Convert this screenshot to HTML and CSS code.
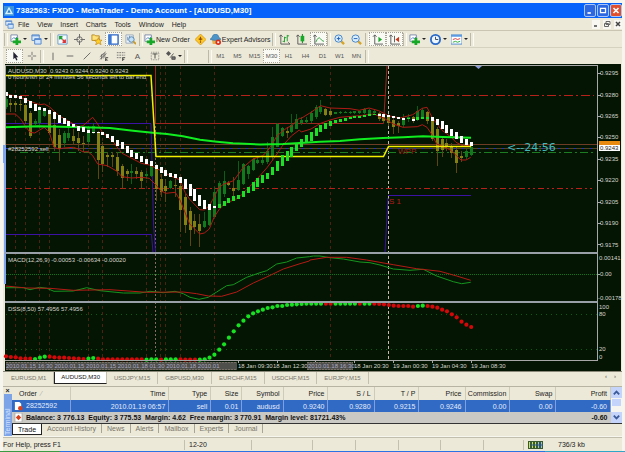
FILE: index.html
```html
<!DOCTYPE html>
<html lang="en">
<head>
<meta charset="utf-8">
<title>MetaTrader - AUDUSD,M30</title>
<link rel="stylesheet" href="styles.css">
</head>
<body>
<svg class="defs" aria-hidden="true">
  <symbol id="i-new" viewBox="0 0 12 12"><path d="M1 1h7v7H1z" fill="#fff" stroke="#7a8aa8"/><path d="M2 6l2-2 2 1 2-2" stroke="#57c" fill="none"/><path d="M6 4h3v3h3v3H9v2H6v-2H3V7h3z" fill="#18a828"/></symbol>
  <symbol id="i-windows" viewBox="0 0 12 12"><path d="M1 1h8v6H1z" fill="#dcecff" stroke="#4f83c9"/><path d="M4 5h7v6H4z" fill="#cfe4ff" stroke="#4f83c9"/><path d="M1 2h8M4 6h7" stroke="#4f83c9"/></symbol>
  <symbol id="i-market" viewBox="0 0 12 12"><path d="M1 1h10v10H1z" fill="#f4fbff" stroke="#6a9bc8"/><path d="M3 3l3 3M3 6V3h3" stroke="#20a030" stroke-width="1.5" fill="none"/><path d="M6 6l3 3M9 6v3H6" stroke="#d33" stroke-width="1.5" fill="none"/></symbol>
  <symbol id="i-target" viewBox="0 0 12 12"><circle cx="6" cy="6" r="3" fill="none" stroke="#666"/><path d="M6 0v5M6 7v5M0 6h5M7 6h5" stroke="#666"/></symbol>
  <symbol id="i-folder" viewBox="0 0 12 12"><path d="M1 1h3l1 1h4v5H1z" fill="#ffe27a" stroke="#b98b20"/><path d="M8 4l1 2.500 3 .2-2 2 1 3-3-1.700L5 12l1-3-2-2 3-.5z" fill="#ffd028" stroke="#b87812" stroke-width=".6"/></symbol>
  <symbol id="i-panel" viewBox="0 0 12 12"><path d="M1 1h10v10H1z" fill="#fff" stroke="#2a65c4" stroke-width="1.500"/><path d="M1 1h3v10H1z" fill="#3c7ad8"/></symbol>
  <symbol id="i-tester" viewBox="0 0 12 12"><path d="M1 1h8v9H1z" fill="#eef4fb" stroke="#9ab"/><path d="M3 3v4M5 2v5" stroke="#68a"/><circle cx="7" cy="6" r="3" fill="#bfe0f8" stroke="#5580a8"/><path d="M9 8l3 3" stroke="#c99a2c" stroke-width="2"/></symbol>
  <symbol id="i-diamond" viewBox="0 0 12 12"><path d="M6 0l6 6-6 6-6-6z" fill="#ffc928" stroke="#c98708" stroke-width=".7"/><path d="M6 3v4M6 8v1.500M4 5.500h4" stroke="#8a4a00" stroke-width="1.300"/></symbol>
  <symbol id="i-expert" viewBox="0 0 12 12"><path d="M2 6h8l-1 5H3z" fill="#e8b04a"/><path d="M0 6q1-2 2-2 1-4 4-4t4 4q1 0 2 2-6 2-12 0z" fill="#4d94c8" stroke="#38729d" stroke-width=".6"/><circle cx="9" cy="9" r="3" fill="#d9301c"/><path d="M8 8h2v2H8z" fill="#fff"/></symbol>
  <symbol id="i-bars" viewBox="0 0 12 12"><path d="M2 1v10h10M0 3l2-2 2 2M10 9l2 2" fill="none" stroke="#555"/><path d="M6 3v6M4 8h2M6 4h2M9 1v7M9 2h2" stroke="#1c9c2c" fill="none"/></symbol>
  <symbol id="i-candle" viewBox="0 0 12 12"><path d="M2 1v10h10M0 3l2-2 2 2" fill="none" stroke="#555"/><path d="M7 0v10" stroke="#087818"/><path d="M5 2h4v6H5z" fill="#18a82a"/></symbol>
  <symbol id="i-line" viewBox="0 0 12 12"><path d="M2 1v10h10M0 3l2-2 2 2" fill="none" stroke="#555"/><path d="M3 9q3-7 5-4t4 3" fill="none" stroke="#26a038"/></symbol>
  <symbol id="i-zoomin" viewBox="0 0 12 12"><path d="M8 8l3 3" stroke="#d4a52c" stroke-width="2.500"/><circle cx="5" cy="5" r="4" fill="#d8eeff" stroke="#3f7fc4"/><path d="M3 5h4M5 3v4" stroke="#1d5bb0"/></symbol>
  <symbol id="i-zoomout" viewBox="0 0 12 12"><path d="M8 8l3 3" stroke="#d4a52c" stroke-width="2.500"/><circle cx="5" cy="5" r="4" fill="#d8eeff" stroke="#3f7fc4"/><path d="M3 5h4" stroke="#1d5bb0"/></symbol>
  <symbol id="i-scroll" viewBox="0 0 12 12"><path d="M3 1v10h9M1 3l2-2 2 2" fill="none" stroke="#555"/><path d="M7 3l4 3-4 3z" fill="#18a82a"/></symbol>
  <symbol id="i-shift" viewBox="0 0 12 12"><path d="M2 1v10h10M0 3l2-2 2 2M6 2v7" fill="none" stroke="#555"/><path d="M11 3v6L7 6z" fill="#c8381c"/></symbol>
  <symbol id="i-clock" viewBox="0 0 12 12"><circle cx="6" cy="6" r="5" fill="#eef6ff" stroke="#2a6ac8" stroke-width="2"/><path d="M6 3v3h3" stroke="#345" fill="none"/></symbol>
  <symbol id="i-template" viewBox="0 0 12 12"><path d="M0 1h12v10H0z" fill="#fff" stroke="#4a88d0"/><path d="M0 1h12v2H0z" fill="#5b9be4"/><path d="M2 6l3-1 2 1 3-1" stroke="#d33" fill="none"/><path d="M2 9l3-1 2 1 3-1" stroke="#2a3" fill="none"/></symbol>
  <symbol id="i-arrow" viewBox="0 0 12 12"><path d="M4 1v9l2-2 1.500 3.500 1.500-.7L7.500 7.500H10z" fill="#223"/></symbol>
  <symbol id="i-cross" viewBox="0 0 12 12"><path d="M6 1v4M6 7v4M1 6h4M7 6h4" stroke="#666"/></symbol>
  <symbol id="i-vline" viewBox="0 0 12 12"><path d="M6 2v9" stroke="#555"/></symbol>
  <symbol id="i-hline" viewBox="0 0 12 12"><path d="M2 6h8" stroke="#555"/></symbol>
  <symbol id="i-trend" viewBox="0 0 12 12"><path d="M2 10l8-8" stroke="#555"/></symbol>
  <symbol id="i-channel" viewBox="0 0 12 12"><path d="M1 7l7-6M1 10l8-7M3 4v6M5 3v6M7 2v6" stroke="#555" stroke-width=".8"/><path d="M11 8H8v4h3M8 10h2" stroke="#333" fill="none"/></symbol>
  <symbol id="i-fibo" viewBox="0 0 12 12"><path d="M1 2h10M1 5h10M1 8h7" stroke="#666" stroke-dasharray="2 1"/><path d="M8 12V8h3M8 10h2" stroke="#333" fill="none"/></symbol>
  <symbol id="i-label" viewBox="0 0 12 12"><path d="M1.500 1.500h9v9h-9z" fill="none" stroke="#777" stroke-dasharray="1 1"/><path d="M3 3.500h6M6 3.500V9" stroke="#333"/></symbol>
  <symbol id="i-shapes" viewBox="0 0 12 12"><path d="M3 0l3 3-3 3-3-3z" fill="#555"/><path d="M5 8l4-5M7 7h4v3H7z" stroke="#444" fill="#777"/></symbol>
</svg>

<header class="title">
  <svg class="ico" viewBox="0 0 12 12"><path d="M0 0h12v12H0z" fill="#3b93dd"/><path d="M6 1l5 9H1z" fill="#d8f1ff"/><path d="M6 4l2 4H4z" fill="#2b7cc2"/></svg>
  <h1>7382563: FXDD - MetaTrader - Demo Account - [AUDUSD,M30]</h1>
  <button class="win" aria-label="Minimize"><svg viewBox="0 0 12 12"><path d="M3 9h4" stroke="#fff" stroke-width="2"/></svg></button>
  <button class="win" aria-label="Restore"><svg viewBox="0 0 12 12"><path d="M3 3.500h6v5H3z" fill="none" stroke="#fff" stroke-width="1.500"/></svg></button>
  <button class="win close" aria-label="Close"><svg viewBox="0 0 12 12"><path d="M3 3l6 6M9 3l-6 6" stroke="#fff" stroke-width="2"/></svg></button>
</header>

<nav class="menu">
  <svg class="ico"><use href="#i-windows"/></svg>
  <button>File</button><button>View</button><button>Insert</button><button>Charts</button><button>Tools</button><button>Window</button><button>Help</button>
  <span class="mdi"><button aria-label="Minimize chart"><svg viewBox="0 0 8 8"><path d="M2 6h3" stroke="#444" stroke-width="1.500"/></svg></button><button aria-label="Restore chart"><svg viewBox="0 0 8 8"><path d="M3 1.500h4v3H3zM1.500 3.500h4v3h-4z" fill="none" stroke="#666"/></svg></button><button aria-label="Close chart"><svg viewBox="0 0 8 8"><path d="M2 2l4 4M6 2L2 6" stroke="#444" stroke-width="1.500"/></svg></button></span>
</nav>

<div class="bar">
  <i class="grip"></i>
  <button class="b dd" aria-label="New chart"><svg><use href="#i-new"/></svg></button>
  <button class="b dd" aria-label="Profiles"><svg><use href="#i-windows"/></svg></button>
  <i class="grip"></i>
  <button class="b" aria-label="Market watch"><svg><use href="#i-market"/></svg></button>
  <button class="b" aria-label="Data window"><svg><use href="#i-target"/></svg></button>
  <button class="b" aria-label="Navigator"><svg><use href="#i-folder"/></svg></button>
  <button class="b on" aria-label="Terminal panel"><svg><use href="#i-panel"/></svg></button>
  <button class="b" aria-label="Strategy tester"><svg><use href="#i-tester"/></svg></button>
  <i class="grip"></i>
  <button class="b wide"><svg><use href="#i-new"/></svg>New Order</button>
  <button class="b" aria-label="MetaEditor"><svg><use href="#i-diamond"/></svg></button>
  <button class="b wide"><svg><use href="#i-expert"/></svg>Expert Advisors</button>
  <i class="grip"></i>
  <button class="b" aria-label="Bar chart"><svg><use href="#i-bars"/></svg></button>
  <button class="b" aria-label="Candlesticks"><svg><use href="#i-candle"/></svg></button>
  <button class="b on" aria-label="Line chart"><svg><use href="#i-line"/></svg></button>
  <i class="grip"></i>
  <button class="b" aria-label="Zoom in"><svg><use href="#i-zoomin"/></svg></button>
  <button class="b" aria-label="Zoom out"><svg><use href="#i-zoomout"/></svg></button>
  <i class="grip"></i>
  <button class="b on" aria-label="Auto scroll"><svg><use href="#i-scroll"/></svg></button>
  <button class="b on" aria-label="Chart shift"><svg><use href="#i-shift"/></svg></button>
  <i class="grip"></i>
  <button class="b dd" aria-label="Indicators"><svg><use href="#i-new"/></svg></button>
  <button class="b dd" aria-label="Periods"><svg><use href="#i-clock"/></svg></button>
  <button class="b dd" aria-label="Templates"><svg><use href="#i-template"/></svg></button>
  <i class="grip"></i>
</div>

<div class="bar tools">
  <button class="b on" aria-label="Cursor"><svg><use href="#i-arrow"/></svg></button>
  <button class="b" aria-label="Crosshair"><svg><use href="#i-cross"/></svg></button>
  <i class="grip"></i>
  <button class="b" aria-label="Vertical line"><svg><use href="#i-vline"/></svg></button>
  <button class="b" aria-label="Horizontal line"><svg><use href="#i-hline"/></svg></button>
  <button class="b" aria-label="Trendline"><svg><use href="#i-trend"/></svg></button>
  <button class="b" aria-label="Channel"><svg><use href="#i-channel"/></svg></button>
  <button class="b" aria-label="Fibonacci"><svg><use href="#i-fibo"/></svg></button>
  <button class="b letter">A</button>
  <button class="b" aria-label="Text label"><svg><use href="#i-label"/></svg></button>
  <button class="b dd" aria-label="Arrows"><svg><use href="#i-shapes"/></svg></button>
  <i class="grip"></i>
  <i class="gap"></i>
  <i class="grip"></i>
  <button class="b">M1</button><button class="b">M5</button><button class="b">M15</button><button class="b on">M30</button><button class="b">H1</button><button class="b">H4</button><button class="b">D1</button><button class="b">W1</button><button class="b">MN</button>
  <i class="grip"></i>
</div>

<main>
<svg class="chart" viewBox="3 64 619 308" role="img" aria-label="AUDUSD M30 chart">
  <path d="M3 64h2v308H3z" fill="#ece9d8"/>
  <path d="M5 64h616v308H5z" fill="#041504"/>
  <path d="M2 145h4v18H2zM4 163h2v121H4z" fill="#7fa6ee"/>
  <g class="crisp">
    <path class="grid" d="M15.500 66v294M25.500 66v294M39.500 66v294M49.500 66v294M88.500 66v294M102.500 66v294M146.500 66v294M160.500 66v294M165.500 66v294M180.500 66v294M214.500 66v294M330.500 66v294"/>
    <path d="M155.500 66v294" stroke="#876b62" stroke-dasharray="2 2"/>
    <path d="M388.500 66v294" stroke="#c8b8b0" stroke-dasharray="3 2"/>
    <path class="red" d="M20 95.500H594" stroke-dasharray="9 3 2 3"/>
    <path class="red" d="M6 188.500H594" stroke-dasharray="6 3 2 3 2 3"/>
    <path d="M6 144.500H597" stroke="#6e3c24"/>
    <path d="M6 148.500H597" stroke="#554522"/>
    <path d="M6 148.500H597" stroke="#2233c0" stroke-dasharray="2 6"/>
    <path d="M20 152.500H594" stroke="#1c7c22" stroke-dasharray="8 3 2 3"/>
    <path d="M6 274.500H597" stroke="#137518" stroke-dasharray="1 1"/>
    <path d="M6 314.500H597M6 349.500H597" stroke="#0f5a14" stroke-dasharray="1 4"/>
  </g>
  <path class="violet" d="M6 123.500H151L153.500 224l2 28M6 234.500H151.500l1.500 18M388 198l-3 54M388 195.500h83"/>
  <path class="red2" d="M155.500 66V123.500H383.500L387 66"/>
  <g id="candles" class="crisp"></g>
  <path id="band-high" class="band"/>
  <path id="band-low" class="band"/>
  <path d="M5 127.300L38 126.300 83 127.300 110 128 133 130.700 155 133 167 134 183 136.300 200 139.700 217 141.700 233 143.300 260 144.500 283 144 300 143 320 141.700 340 141 360 139.300 383 138 403 137.300 423 136.300 443 137 471 137.700" fill="none" stroke="#10ee20" stroke-width="2"/>
  <path d="M5 75.500H151L156 156.500H383.500L388.500 146.500H471" fill="none" stroke="#f4ee00" stroke-width="1.500"/>
  <g id="ribbon" class="crisp"></g>
  <path id="macd" fill="none" stroke="#16951e"/>
  <path id="signal" fill="none" stroke="#b41a14"/>
  <g id="dss"></g>
  <path d="M475 66h7l-3.500 3z" fill="#8a9ad8"/>
  <g class="crisp">
    <path d="M5 65.500h593M5.500 65v80M597.500 65v296M5 360.500h593" stroke="#a8a8a8"/>
    <path d="M5 252h593v2H5zM5 301h593v2H5z" fill="#9aa0a8"/>
    <path d="M598 73.500h3M598 95.500h3M598 116.500h3M598 137.500h3M598 159.500h3M598 180.500h3M598 202.500h3M598 223.500h3M598 244.500h3M598 274.500h2M238.500 361v2M277.500 361v2M315.500 361v2M354.500 361v2M393.500 361v2M432.500 361v2M471.500 361v2" stroke="#a8a8a8"/>
    <path d="M3 371.500h619" stroke="#8a8878"/>
    <path d="M599 141h21v4h-21z" fill="#e88a10"/>
    <path d="M599 145h21v6h-21z" fill="#fff"/>
    <path d="M6 362h231v8H6zM307 362h46v8h-46z" fill="#4f4f4c"/>
    <path d="M6 362.500h231M6 369.500h231M307 362.500h46M307 369.500h46" stroke="#777064" stroke-dasharray="2 1"/>
  </g>
  <g class="lbl">
    <text x="8" y="73">AUDUSD,M30&#160; 0.9243 0.9244 0.9240 0.9243</text>
    <text x="8" y="79">0 hours/ish or 24 minutes 56 seconds left to bar end</text>
    <text x="8" y="151">#28252592 sell</text>
    <text x="8" y="262">MACD(12,26,9) -0.00053 -0.00634 -0.00020</text>
    <text x="8" y="311">DSS(8,50) 57.4956 57.4956</text>
    <text x="600" y="75">0.9295</text><text x="600" y="97">0.9280</text><text x="600" y="118">0.9265</text><text x="600" y="139">0.9250</text><text x="600" y="161">0.9235</text><text x="600" y="182">0.9220</text><text x="600" y="204">0.9205</text><text x="600" y="225">0.9190</text><text x="600" y="247">0.9175</text>
    <text x="600" y="150" class="dark">0.9243</text>
    <text x="599" y="260">0.00141</text><text x="600" y="276">0.00</text><text x="598" y="300">-0.00178</text>
    <text x="599" y="309">100</text><text x="599" y="316">80</text><text x="599" y="351">20</text><text x="599" y="359">0</text>
    <text x="238" y="368">18 Jan 09:30</text><text x="273" y="368">18 Jan 12:30</text><text x="354" y="368">18 Jan 20:30</text><text x="393" y="368">19 Jan 00:30</text><text x="432" y="368">19 Jan 04:30</text><text x="471" y="368">19 Jan 08:30</text>
    <g class="dim"><text x="6" y="368">2010.01.15 16:30 2010.01.15 2010.01.15 2010.01.18 01:30 2010.01.18 2010.01</text><text x="308" y="368">2010.01.18 16:30</text></g>
  </g>
  <text x="398" y="154" class="mark wpp">WPP</text>
  <text x="389" y="204" class="mark">S 1</text>
  <text x="507" y="151" class="count">&lt;--24:56</text>
</svg>

<div class="tabs charts">
  <button>EURUSD,M1</button><button class="cur">AUDUSD,M30</button><button>USDJPY,M15</button><button>GBPUSD,M30</button><button>EURCHF,M15</button><button>USDCHF,M15</button><button>EURJPY,M15</button>
  <span class="arrows"><b>‹</b><b>›</b></span>
</div>
</main>

<section class="terminal">
  <div class="side"><button aria-label="Close terminal">×</button><span>Terminal</span></div>
  <div class="pane">
    <div class="list">
      <table>
        <colgroup><col class="c58"><col class="c99"><col class="c42"><col class="c31"><col class="c41"><col class="c45"><col class="c46"><col class="c45"><col class="c46"><col class="c45"><col class="c46"><col class="c54"></colgroup>
        <thead><tr><th class="l">Order <span class="sort">⁄</span></th><th>Time</th><th>Type</th><th>Size</th><th>Symbol</th><th>Price</th><th>S / L</th><th>T / P</th><th>Price</th><th>Commission</th><th>Swap</th><th>Profit</th></tr></thead>
        <tbody>
          <tr class="sel"><td class="l"><svg class="ico" viewBox="0 0 10 10"><path d="M1 0h5l2 2v7H1z" fill="#fff"/><circle cx="7" cy="7" r="2.500" fill="#d8401c"/></svg>28252592</td><td>2010.01.19 06:57</td><td>sell</td><td>0.01</td><td>audusd</td><td>0.9240</td><td>0.9280</td><td>0.9215</td><td>0.9246</td><td>0.00</td><td>0.00</td><td>-0.60</td></tr>
          <tr class="sum"><td class="l" colspan="11"><svg class="ico" viewBox="0 0 10 10"><path d="M1 0h8v10H1z" fill="#fff" stroke="#aaa"/><path d="M5 2l3 3-3 3-3-3z" fill="#d8401c"/></svg>Balance: 3 776.13&#160; Equity: 3 775.53&#160; Margin: 4.62&#160; Free margin: 3 770.91&#160; Margin level: 81721.43%</td><td>-0.60</td></tr>
        </tbody>
      </table>
      <div class="scroll"><button aria-label="Scroll up"><svg viewBox="0 0 10 10"><path d="M2 7l3-3 3 3" fill="none" stroke="#3a5a98" stroke-width="2"/></svg></button><i></i><button aria-label="Scroll down"><svg viewBox="0 0 10 10"><path d="M2 3l3 3 3-3" fill="none" stroke="#3a5a98" stroke-width="2"/></svg></button></div>
    </div>
    <div class="tabs">
      <button class="cur">Trade</button><button>Account History</button><button>News</button><button>Alerts</button><button>Mailbox</button><button>Experts</button><button>Journal</button>
    </div>
  </div>
</section>

<footer class="status">
  <span>For Help, press F1</span><span>12-20</span><span></span><span></span><span></span><span></span><span></span><span></span>
  <span class="net"><svg viewBox="0 0 15 8"><path d="M0 0h15v8H0z" fill="#3a5a30"/><path d="M1.500 1v6M4.500 1v6M7.500 1v6" stroke="#c8e070"/><path d="M10.500 1v6M13.500 1v6" stroke="#9ac0e8"/><path d="M3 4h12" stroke="#2a5a90"/></svg>736/3 kb</span>
</footer>
<div class="taskbar"></div>
<script src="chart.js"></script>
</body>
</html>
```
FILE: styles.css
```css
* { box-sizing: border-box; }
body { margin: 0; padding-top: 3px; background: #f6f5ee; font: 7px/9px "Liberation Sans", Arial, sans-serif; color: #222; }
button { font: inherit; color: inherit; background: none; border: 0; padding: 0; margin: 0; white-space: nowrap; }
.defs { position: absolute; width: 0; height: 0; }
.title, .menu, .bar, main, .terminal, .status { margin: 0 3px; background: #ece9d8; }

.title { display: flex; align-items: center; gap: 1px; height: 15px; padding: 0 0 0 1px; background: #0562fa; color: #fff; }
.title .ico { width: 10px; height: 10px; }
.title h1 { margin: 0 auto 0 1px; font: bold 8px/10px "Liberation Sans", sans-serif; white-space: nowrap; }
.win { width: 12px; height: 13px; border: 1px solid #a9c4f8; border-radius: 2px; background: #2e68e0; }
.win svg { display: block; width: 10px; height: 11px; }
.win.close { background: #e0502c; }

.menu { display: flex; align-items: center; gap: 8px; height: 13px; padding-left: 2px; border-bottom: 1px solid #c9c5b2; }
.menu .ico { width: 9px; height: 9px; margin-right: -4px; }
.mdi { display: flex; gap: 3px; margin-left: auto; }
.mdi button { width: 8px; height: 9px; background: #f8f7f2; }
.mdi svg { display: block; width: 8px; height: 8px; }

.bar { display: flex; align-items: center; height: 17px; padding-left: 1px; border-bottom: 1px solid #d6d2c0; }
.bar.tools { height: 16px; padding-left: 3px; border: 0; color: #555; font-size: 6px; }
.b { display: flex; flex: none; align-items: center; justify-content: center; width: 17px; height: 14px; }
.b svg { width: 11px; height: 11px; }
.tools .b svg { width: 10px; height: 10px; }
.b.letter { font-size: 8px; }
.b.on { background: #fafaf4; border: 1px dotted #a8a498; }
.b.dd { width: 21px; gap: 2px; }
.b.dd::after { content: ""; border: 2px solid transparent; border-top-color: #222; border-bottom: 0; }
.b.wide { width: auto; padding: 0 2px 0 1px; gap: 1px; }
.grip { flex: none; width: 4px; height: 13px; border-left: 1px solid #bdb9a8; border-right: 1px solid #fbfaf4; }
.gap { width: 20px; }

.chart { display: block; width: 100%; height: auto; font-family: "Liberation Sans", sans-serif; }
.crisp { shape-rendering: crispEdges; }
.grid { stroke: #4a2412; stroke-dasharray: 3 3; }
.red { stroke: #b8201a; }
.red2 { fill: none; stroke: #a02420; }
.violet { fill: none; stroke: #3c12a4; }
.band { fill: none; stroke: #b01a15; }
.lbl { font-size: 6px; fill: #d4d4cc; }
.lbl .dark { fill: #222; }
.dim { fill: #a8a8c0; }
.mark { font-size: 8px; fill: #b81c18; }
.wpp { fill: #96200f; }
.count { font: 11px "DejaVu Sans", sans-serif; fill: #41b9bb; }

.tabs { display: flex; height: 12px; color: #77746a; }
.tabs button { padding: 0 5px; border-right: 1px solid #a8a496; height: 9px; }
.tabs .cur { height: 11px; background: #fff; color: #111; border: 1px solid #222; border-top: 0; }
.tabs.charts { height: 15px; padding-left: 1px; font-size: 6px; border-bottom: 1px solid #b8b4a4; }
.tabs.charts button { padding: 0 7px; height: 12px; border-right-color: #c4c0b0; }
.tabs.charts .cur { padding: 0 6px; }
.arrows { display: flex; gap: 7px; margin-left: auto; padding-right: 6px; }

.terminal { display: flex; }
.side { display: flex; flex-direction: column; align-items: center; width: 9px; }
.side button { height: 7px; line-height: 7px; font-weight: bold; }
.side span { flex: 1; width: 8px; writing-mode: vertical-rl; transform: rotate(180deg); background: #7ea4e8; color: #d6e4ff; line-height: 8px; padding-top: 1px; }
.pane { flex: 1; min-width: 0; }
.list { display: flex; border-bottom: 1px solid #333; }
table { flex: 1; min-width: 0; border-collapse: collapse; table-layout: fixed; }
th, td { padding: 0 3px 0 0; font-weight: normal; text-align: right; white-space: nowrap; }
th { height: 13px; border-right: 1px solid #cfcbb9; }
.l { text-align: left; padding-left: 2px; }
th.l { padding-left: 7px; }
.l .ico { width: 9px; height: 9px; margin-right: 3px; vertical-align: middle; }
.sel td { height: 12px; background: #316ac5; color: #e4ecfa; border-right: 1px solid #7fa0dc; }
.sum td { height: 11px; background: #cbc9c4; font-weight: bold; color: #111; }
.c58 { width: 9.7%; } .c99 { width: 16.5%; } .c42 { width: 7%; } .c31 { width: 5.2%; } .c41 { width: 6.9%; }
.c45 { width: 7.5%; } .c46 { width: 7.7%; } .c54 { width: 9.1%; }
.sort { color: #aaa; padding-left: 2px; }
.scroll { display: flex; flex-direction: column; width: 11px; background: #f6f5ef; }
.scroll button { height: 11px; background: #c4d4fb; }
.scroll svg { display: block; width: 9px; height: 9px; margin: auto; }
.scroll i { height: 7px; margin: 1px 1px auto; background: #c4d4fb; }

.status { display: grid; grid-template-columns: 182fr 67fr 61fr 43fr 43fr 42fr 43fr 40fr 98fr; margin-top: 1px; padding: 2px 0 1px; border-top: 1px solid #c2beae; }
.status span { height: 10px; line-height: 10px; border-right: 1px solid #c4c0b0; padding-left: 4px; }
.status span:first-child { padding-left: 0; }
.status .net { display: flex; align-items: center; gap: 15px; border: 0; }
.net svg { width: 15px; height: 8px; }
.taskbar { height: 3px; background: linear-gradient(90deg, #3a9a44 60px, #2b73e4 60px 545px, #2fa6c8 545px); }
```
FILE: chart.js
```js
// Bars are evenly spaced; y values are thirds of a pixel below each pane's top.
const NS = "http://www.w3.org/2000/svg";
const STEP = 4.846, X0 = 5.5;
const x = i => X0 + STEP * i;
const price = v => 64 + v / 3;
const osc = v => 250 + v / 3;

function add(parent, tag, attrs) {
  const el = document.createElementNS(NS, tag);
  for (const k in attrs) el.setAttribute(k, attrs[k]);
  document.getElementById(parent).appendChild(el);
}

// kind, body top, body bottom, high, low
const candles = `g105,130,100,135 o118,122,105,145 o118,122,112,145 o120,124,108,140 o122,170,115,180 o147,217,140,222
g172,180,165,183 g130,178,125,182 g140,155,135,160 o147,207,140,210 o184,248,165,262 o213,255,195,292 g207,236,200,250
g207,222,175,232 o215,230,195,242 o222,238,205,262 o236,240,215,265 g190,235,185,240 g186,205,178,210 o208,288,200,345
o247,300,235,325 o274,280,265,310 o274,280,265,310 o280,320,265,335 o306,342,300,375 o322,330,315,350 g322,328,300,360
o322,330,310,345 o325,350,318,374 g330,336,320,345 g303,335,300,338 o305,376,300,410 o345,385,330,400 o365,380,345,415
g352,372,347,376 o362,366,345,400 o365,437,350,505 o398,482,390,508 o440,497,430,545 o470,488,450,510 o479,500,450,550
g470,490,445,492 g437,482,430,485 g384,458,370,460 g357,425,350,428 g352,390,320,400 o358,362,352,365 o372,380,340,395
g348,378,290,380 g300,360,297,362 g306,330,303,345 g285,318,282,322 g287,297,280,300 g288,296,276,302 g262,293,235,300
g218,278,190,290 g180,248,178,250 g192,216,190,220 o200,206,190,222 g182,203,150,208 g165,194,150,196 g168,178,160,182
g168,175,160,180 g148,172,140,176 g128,160,122,165 g128,145,108,150 o136,152,132,155 o140,152,133,156 g145,149,143,150
g144,147,142,149 g143,146,142,148 g143,147,141,149 g142,148,140,150 g142,147,140,149 g135,148,132,150 g138,150,134,152
g140,148,137,152 o147,165,143,172 o150,170,147,176 o155,178,150,186 o168,190,163,210 o178,186,172,208 g162,182,150,188
g160,166,150,175 o160,172,155,178 g140,165,125,170 g138,162,133,166 o145,172,140,180 o165,225,160,232 o195,262,188,305
o225,258,215,280 o238,248,225,262 o245,268,238,282 o258,297,250,328 o275,283,262,295 g262,280,255,284 g250,272,246,276`.split(/\s+/);
candles.forEach((c, i) => {
  const up = c[0] === "g";
  const [top, bottom, high, low] = c.slice(1).split(",").map(Number);
  const cx = Math.round(x(i));
  add("candles", "path", { d: `M${cx + .5} ${price(high)}V${price(low)}`, stroke: up ? "#0f5c16" : "#5e4512" });
  add("candles", "rect", { x: cx - 1, y: price(top), width: 3, height: Math.max(1, (bottom - top) / 3), fill: up ? "#127a1c" : "#858014" });
});

const ribbon = `w83,97 w92,101 w94,103 w96,104 w101,116 w110,132 w120,140 w130,137 w133,140 w138,150 w143,164 w152,178 w163,180
w172,187 w180,190 w186,200 w190,203 w199,208 w203,208 w203,208 w205,214 w209,222 w217,235 w228,247 w235,255 w246,266 w258,279
w267,286 w277,293 w285,300 w291,306 w304,314 w309,326 w318,335 w326,339 w331,342 w338,357 w345,374 w361,395 w376,411 w393,426
w408,435 w420,437 w427,432 g420,431 g410,425 g402,417 g397,411 g392,405 g380,399 g368,388 g354,380 g342,368 g334,358 g327,346
g308,334 g290,321 g273,305 g262,290 g248,278 g236,262 g225,250 g214,238 g205,230 g192,216 g182,204 g176,196 g172,186 g168,178
g164,174 g161,171 g158,166 g157,163 g155,161 g153,159 g151,157 g149,154 w149,155 w151,158 w153,159 w157,163 w160,166 w162,168
g162,166 w165,172 g160,167 g158,165 g160,166 w160,172 w164,184 w172,194 w184,207 w194,216 w205,226 w215,236 w225,242 w234,245`.split(/\s+/);
ribbon.forEach((r, i) => {
  const [top, bottom] = r.slice(1).split(",").map(Number);
  add("ribbon", "rect", { x: Math.round(x(i)) - 1, y: price(top), width: 3, height: (bottom - top) / 3, fill: r[0] === "w" ? "#fff" : "#1be025" });
});

// Runs of "x,y" points, each run prefixed by its left edge.
function line(id, top, runs) {
  const pts = runs.flatMap(([left, s]) => s.split(" ").map(p => {
    const [a, b] = p.split(",").map(Number);
    return `${(left + a / 3).toFixed(1)} ${(top + b / 3).toFixed(1)}`;
  }));
  document.getElementById(id).setAttribute("d", "M" + pts.join("L"));
}
line("band-high", 64, [
  [0, "17,90 60,100 90,112 119,122 133,120 148,128 177,155 235,188 249,185 278,160 293,180 307,205 337,230 366,268 395,283 424,298 448,303"],
  [150, "17,312 61,335 90,348 105,385 119,406 149,437 163,438 178,425 192,400 207,370 222,360 251,350 280,310 309,285 338,275 352,262 367,240 381,215 410,192 425,185 448,163"],
  [300, "4,163 33,145 62,125 90,132 150,134 178,139 207,132 236,140 265,155 300,162 338,152 367,133 381,130 396,160 425,198"],
  [450, "4,220 18,235 40,246 62,243"]]);
line("band-low", 64, [
  [0, "17,150 46,150 62,165 75,185 90,205 104,207 119,198 133,190 148,205 162,250 177,255 191,252 220,250 235,255 249,264 264,263 278,275 293,300 322,305 351,322 366,338 395,342 424,340 448,343"],
  [150, "17,362 32,380 47,388 76,385 90,408 119,480 149,510 163,507 178,495 192,460 207,437 222,420 265,402 294,373 323,343 352,310 381,270 396,247 425,215 448,198"],
  [300, "4,204 33,195 62,178 90,168 120,160 178,155 222,150 251,162 280,180 309,190 352,188 367,182 381,190 396,212 410,240 440,252 454,260 469,275"],
  [450, "33,288 48,288 62,280"]]);
line("macd", 250, [
  [0, "17,113 70,113 90,119 119,112 140,115 162,124 220,123 260,113 300,122 370,129 420,129 450,124 490,128 525,124 550,131 570,142 597,148 625,142 650,126 680,107 700,104 740,82 780,68 800,62 830,42 860,36 890,24 928,20"],
  [310, "10,18 30,18 60,23 100,27 150,36 180,38 210,45 250,57 300,61 340,58 380,78 430,95 455,101 482,97"]]);
line("signal", 250, [
  [0, "17,108 80,114 150,115 220,121 330,119 440,127 550,126 590,131 625,138 665,139 710,126 760,99 800,81 850,57 900,41 928,33"],
  [310, "0,30 50,22 110,22 170,30 250,44 320,56 390,64 440,78 482,91"]]);

const dss = [319,321,322,325,326,326,327,323,320,320,322,323,323,324,325,326,327,326,324,326,328,328,328,328,328,328,328,328,328,
  329,328,328,329,328,328,328,328,329,329,329,329,328,323,314,299,283,263,244,226,212,199,190,184,179,174,172,168,168,165,164,163,162,161,
  161,161,161,161,161,161,161,161,161,161,161,161,161,161,162,163,165,167,168,168,168,170,168,167,168,170,173,179,184,193,202,215,224,231];
const rising = [[6, 8], [17, 18], [29, 31], [33, 35], [40, 65], [68, 72], [74, 75], [85, 86]];
dss.forEach((v, i) => {
  const up = rising.some(([a, b]) => i >= a && i <= b);
  add("dss", "circle", { cx: x(i) + .5, cy: osc(v), r: 2.1, fill: up ? "#18e022" : "#d40808" });
});
```
